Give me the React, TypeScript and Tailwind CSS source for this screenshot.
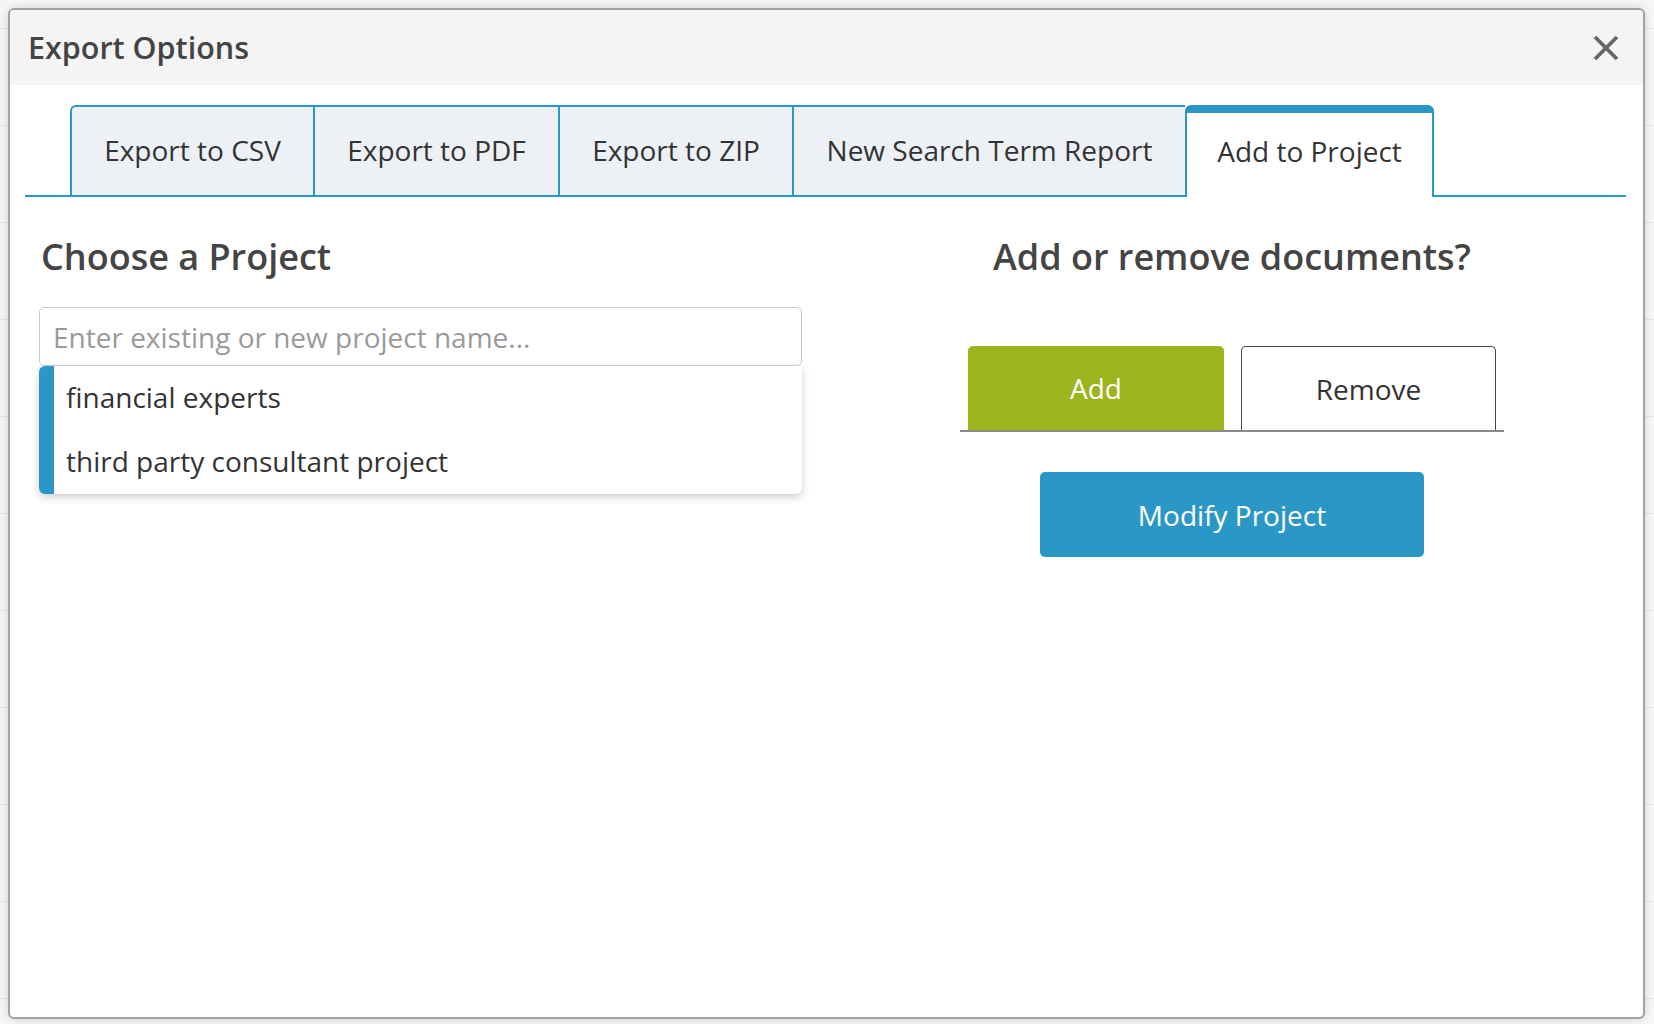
import { useState } from "react";

const tabs = [
  { label: "Export to CSV", width: "w-[243px]" },
  { label: "Export to PDF", width: "w-[245px]" },
  { label: "Export to ZIP", width: "w-[234px]" },
  { label: "New Search Term Report", width: "w-[393px]" },
  { label: "Add to Project", width: "w-[249px]" },
];

const projects = ["financial experts", "third party consultant project"];

function CloseIcon() {
  return (
    <svg width="26" height="26" viewBox="0 0 26 26" fill="none">
      <path d="M2 2 L24 24 M24 2 L2 24" stroke="#666" strokeWidth="3.8" />
    </svg>
  );
}

export default function App() {
  const [active, setActive] = useState(4);
  const [mode, setMode] = useState<"add" | "remove">("add");
  const [name, setName] = useState("");

  return (
    <div
      className="h-[1024px] w-[1654px] overflow-hidden bg-[#f6f6f6] bg-[repeating-linear-gradient(to_bottom,transparent_0px,transparent_28px,#e4e4e4_28px,#e4e4e4_29px,transparent_29px,transparent_97px)] pt-[8px] pl-[8px]"
      style={{ fontFamily: '"Open Sans", "Noto Sans", sans-serif' }}
    >
      <div className="flex h-[1011px] w-[1637px] flex-col overflow-hidden rounded-[6px] border-2 border-[#a2a2a2] bg-white shadow-[0_0_10px_rgba(0,0,0,0.15)]">
        {/* header */}
        <div className="flex h-[75px] shrink-0 items-center justify-between bg-[#f4f4f4] pl-[18px] pr-[24px]">
          <h2 className="text-[30.5px] font-semibold text-[#444]">Export Options</h2>
          <button className="flex items-center justify-center">
            <CloseIcon />
          </button>
        </div>

        {/* tabs */}
        <div className="pl-[15px] pr-[17px] pt-[20px]">
          <div className="flex items-end border-b-2 border-[#2b97c7] pl-[45px]">
            {tabs.map((t, i) =>
              i === active ? (
                <button
                  key={t.label}
                  onClick={() => setActive(i)}
                  className={`${t.width} relative -mb-[2px] flex h-[92px] items-center justify-center rounded-t-[6px] border-x-2 border-t-[8px] border-[#2b97c7] bg-white pb-[8px] text-[28px] text-[#333]`}
                >
                  {t.label}
                </button>
              ) : (
                <button
                  key={t.label}
                  onClick={() => setActive(i)}
                  className={`${t.width} flex h-[90px] items-center justify-center border-t-2 border-l-2 border-[#2b97c7] bg-[#edf1f5] pb-[2px] text-[28px] text-[#333] ${
                    i === 0 ? "rounded-tl-[6px]" : ""
                  }`}
                >
                  {t.label}
                </button>
              )
            )}
          </div>
        </div>

        {/* body */}
        <div className="flex pl-[29px] pr-[28px] pt-[38px]">
          <div className="w-[763px] shrink-0">
            <h3 className="pl-[2px] text-[36px] leading-[44px] font-semibold text-[#444]">
              Choose a Project
            </h3>
            <input
              value={name}
              onChange={(e) => setName(e.target.value)}
              placeholder="Enter existing or new project name..."
              className="mt-[28px] h-[59px] w-full rounded-[5px] border-[1.5px] border-[#c9c9c9] px-[13px] text-[28px] text-[#333] outline-none placeholder:text-[#9a9a9a]"
            />
            <div className="flex rounded-b-[6px] rounded-tl-[6px] bg-white shadow-[0_3px_8px_rgba(0,0,0,0.2)]">
              <div className="w-[15px] shrink-0 rounded-tl-[6px] rounded-bl-[6px] bg-[#2b97c7]" />
              <ul className="flex-1">
                {projects.map((p) => (
                  <li
                    key={p}
                    onClick={() => setName(p)}
                    className="flex h-[64px] cursor-pointer items-center pb-[2px] pl-[12px] text-[28px] text-[#333]"
                  >
                    {p}
                  </li>
                ))}
              </ul>
            </div>
          </div>

          <div className="ml-[47px] flex flex-1 flex-col items-center">
            <h3 className="text-[36px] leading-[44px] font-semibold text-[#444]">
              Add or remove documents?
            </h3>
            <div className="mt-[67px] flex w-[544px] gap-[17px] border-b-2 border-[#8a8a8a] px-[8px]">
              <button
                onClick={() => setMode("add")}
                className={`flex h-[84px] w-[256px] items-center justify-center rounded-t-[5px] text-[28px] ${
                  mode === "add"
                    ? "bg-[#9db51c] text-white"
                    : "border-x-[1.5px] border-t-[1.5px] border-[#444] bg-white text-[#333]"
                }`}
              >
                Add
              </button>
              <button
                onClick={() => setMode("remove")}
                className={`flex h-[84px] w-[255px] items-center justify-center rounded-t-[5px] text-[28px] ${
                  mode === "remove"
                    ? "bg-[#9db51c] text-white"
                    : "border-x-[1.5px] border-t-[1.5px] border-[#444] bg-white text-[#333]"
                }`}
              >
                Remove
              </button>
            </div>
            <button className="mt-[40px] flex h-[85px] w-[384px] items-center justify-center rounded-[5px] bg-[#2b97c7] text-[28px] text-white">
              Modify Project
            </button>
          </div>
        </div>
      </div>
    </div>
  );
}
